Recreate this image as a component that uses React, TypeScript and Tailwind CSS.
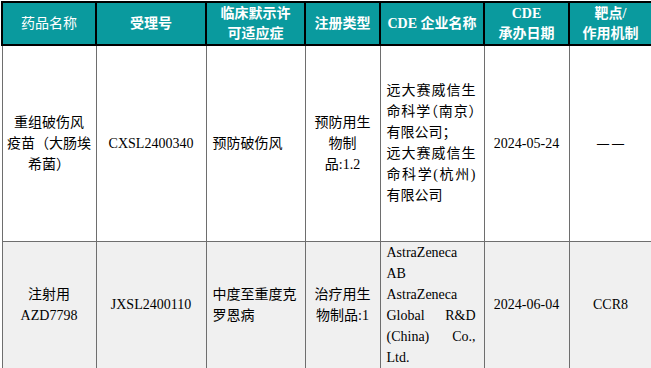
const font = "font-['Liberation_Serif','Noto_Sans_CJK_SC',serif]"

const th =
  'border-2 border-black bg-[#0a9a9e] text-white font-bold text-[14px] leading-[20px] text-center align-middle p-0'
const td = 'border border-[#6e6e6e] text-[14px] leading-[21px] text-black align-middle p-0'

function Lines({ lines, justify = [] }: { lines: string[]; justify?: number[] }) {
  return (
    <>
      {lines.map((l, i) => (
        <div key={i} className={justify.includes(i) ? 'text-justify [text-align-last:justify]' : ''}>
          {l}
        </div>
      ))}
    </>
  )
}

export default function App() {
  return (
    <div className={`w-[651px] h-[368px] bg-white pl-[1px] pt-[1px] ${font}`}>
      <table className="table-fixed border-collapse w-[650px]">
        <colgroup>
          <col className="w-[94px]" />
          <col className="w-[110px]" />
          <col className="w-[99px]" />
          <col className="w-[75px]" />
          <col className="w-[104px]" />
          <col className="w-[85px]" />
          <col className="w-[83px]" />
        </colgroup>
        <thead>
          <tr className="h-[43px]">
            <th className={`${th} font-normal`}>药品名称</th>
            <th className={th}>受理号</th>
            <th className={th}>
              <Lines lines={['临床默示许', '可适应症']} />
            </th>
            <th className={th}>注册类型</th>
            <th className={th}>CDE 企业名称</th>
            <th className={th}>
              <Lines lines={['CDE', '承办日期']} />
            </th>
            <th className={th}>
              <Lines lines={['靶点/', '作用机制']} />
            </th>
          </tr>
        </thead>
        <tbody>
          <tr className="h-[196px] bg-white">
            <td className={`${td} text-center`}>
              <Lines lines={['重组破伤风', '疫苗（大肠埃', '希菌）']} />
            </td>
            <td className={`${td} text-center text-[#111]`}>CXSL2400340</td>
            <td className={`${td} pl-[6px]`}>预防破伤风</td>
            <td className={`${td} text-center`}>
              <Lines lines={['预防用生', '物制', '品:1.2']} />
            </td>
            <td className={`${td} pl-[6px] pr-[8px] [font-feature-settings:'halt']`}>
              <Lines
                lines={['远大赛威信生', '命科学（南京）', '有限公司；', '远大赛威信生', '命科学(杭州)', '有限公司']}
                justify={[0, 1, 3, 4]}
              />
            </td>
            <td className={`${td} text-center text-[#111]`}>2024-05-24</td>
            <td className={`${td} text-center`}>
              <span className="text-[12px] font-bold tracking-[3px] pl-[3px]">——</span>
            </td>
          </tr>
          <tr className="h-[127px] bg-[#f0f0f0]">
            <td className={`${td} border-t-black text-center`}>
              <Lines lines={['注射用', 'AZD7798']} />
            </td>
            <td className={`${td} border-t-black text-center text-[#111]`}>JXSL2400110</td>
            <td className={`${td} border-t-black pl-[6px]`}>
              <Lines lines={['中度至重度克', '罗恩病']} />
            </td>
            <td className={`${td} border-t-black text-center`}>
              <Lines lines={['治疗用生', '物制品:1']} />
            </td>
            <td className={`${td} border-t-black pl-[6px] pr-[8px]`}>
              <Lines
                lines={['AstraZeneca', 'AB', 'AstraZeneca', 'Global R&D', '(China) Co.,', 'Ltd.']}
                justify={[3, 4]}
              />
            </td>
            <td className={`${td} border-t-black text-center text-[#111]`}>2024-06-04</td>
            <td className={`${td} border-t-black text-center text-[#111]`}>CCR8</td>
          </tr>
        </tbody>
      </table>
    </div>
  )
}
